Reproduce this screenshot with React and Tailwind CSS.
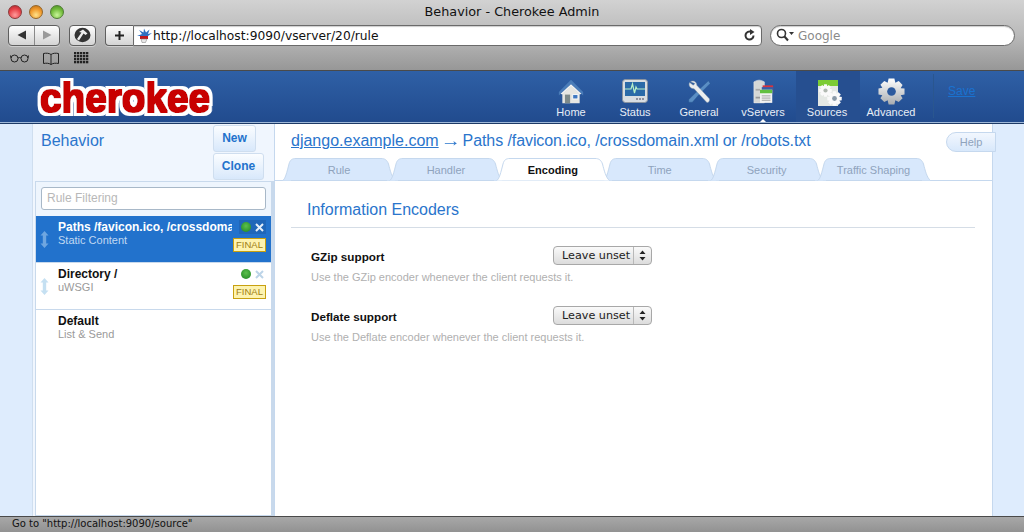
import React from "react";

const Lights = () => (
  <div className="flex gap-[7px] pl-[8px]">
    <span className="w-[14px] h-[14px] rounded-full border border-[#8a3a3a] bg-[radial-gradient(circle_at_50%_75%,#ff9c9c,#e8444a_55%,#a8242a)]" />
    <span className="w-[14px] h-[14px] rounded-full border border-[#93662a] bg-[radial-gradient(circle_at_50%_75%,#ffe28a,#f09a2c_55%,#b86a14)]" />
    <span className="w-[14px] h-[14px] rounded-full border border-[#4f7d35] bg-[radial-gradient(circle_at_50%_75%,#c8f59a,#74bd3d_55%,#4a8a22)]" />
  </div>
);

const btn = "bg-gradient-to-b from-[#fdfdfd] to-[#d4d4d4] border border-[#5f5f5f] shadow-[0_1px_0_rgba(255,255,255,0.4)]";

const Chrome = () => (
  <div className="h-[71px] shrink-0 border-b border-[#4a4a4a] bg-gradient-to-b from-[#d2d2d2] via-[#bababa] to-[#979797] font-['DejaVu_Sans',sans-serif] relative">
    <div className="h-[24px] flex items-center relative">
      <Lights />
      <span className="absolute inset-x-0 top-[3px] text-center text-[12.8px] leading-[18px] text-[#111]">Behavior - Cherokee Admin</span>
    </div>
    <div className="h-[22px] flex items-center pl-[8px]">
      <div className={`w-[52px] h-[21px] rounded-[4px] flex ${btn}`}>
        <div className="w-[26px] flex items-center justify-center border-r border-[#8a8a8a]">
          <svg width="10" height="10" viewBox="0 0 10 10"><path d="M0.5 5L9 0.5V9.5Z" fill="#333" /></svg>
        </div>
        <div className="flex-1 flex items-center justify-center">
          <svg width="10" height="10" viewBox="0 0 10 10"><path d="M9.5 5L1 0.5V9.5Z" fill="#9a9a9a" /></svg>
        </div>
      </div>
      <div className={`ml-[9px] w-[27px] h-[21px] rounded-[4px] flex items-center justify-center ${btn}`}>
        <svg width="19" height="16" viewBox="0 0 19 16">
          <ellipse cx="9.5" cy="8" rx="8" ry="7.2" fill="#333" />
          <path d="M6 5L10 2.5L14.5 6.5L12.5 8L10.5 6.5L6 13.5L4 12L8.5 5.5Z" fill="#eee" />
        </svg>
      </div>
      <div className={`ml-[9px] w-[28px] h-[21px] rounded-l-[4px] flex items-center justify-center border-r-0 ${btn}`}>
        <svg width="11" height="11" viewBox="0 0 11 11"><path d="M5.5 1V10M1 5.5H10" stroke="#222" strokeWidth="2" /></svg>
      </div>
      <div className="w-[629px] h-[21px] bg-white border border-[#6a6a6a] rounded-r-[4px] flex items-center pl-[2px] pr-[5px] shadow-[inset_0_1px_1px_rgba(0,0,0,0.2)]">
        <svg width="17" height="15" viewBox="0 0 17 15" className="shrink-0">
          <path d="M1 8L6 6L3 2L7.5 4.5L8 0.5L10 4.5L13.5 1.5L12 6L16 5L12 8Z" fill="#2f6fc0" />
          <rect x="4" y="8" width="8" height="3" fill="#c0181c" />
          <path d="M5 11H11L9.5 14.5H6Z" fill="#e8e8e8" stroke="#777" strokeWidth="0.5" />
        </svg>
        <span className="pt-[1px] text-[12.25px] leading-[18px] text-[#111] flex-1">http://localhost:9090/vserver/20/rule</span>
        <svg width="13" height="13" viewBox="0 0 13 13"><path d="M10.5 6.5A4 4 0 1 1 8.2 2.9" fill="none" stroke="#333" strokeWidth="2" /><path d="M7 0L11.5 3L7 6Z" fill="#333" /></svg>
      </div>
      <div className="ml-[8px] w-[245px] h-[21px] bg-white border border-[#6a6a6a] rounded-full flex items-center pl-[5px] shadow-[inset_0_1px_1px_rgba(0,0,0,0.2)]">
        <svg width="18" height="14" viewBox="0 0 18 14">
          <circle cx="5.5" cy="5.5" r="4" fill="none" stroke="#333" strokeWidth="1.6" />
          <path d="M8.5 8.5L12 12.5" stroke="#333" strokeWidth="2" />
          <path d="M13 4H18L15.5 7Z" fill="#333" />
        </svg>
        <span className="ml-[4px] pt-[1px] text-[12px] text-[#8a8a8a] leading-[16px]">Google</span>
      </div>
    </div>
    <div className="h-[24px] flex items-center pl-[10px] gap-[12px]">
      <svg width="19" height="10" viewBox="0 0 19 10" fill="none" stroke="#222" strokeWidth="1">
        <circle cx="4.5" cy="5.5" r="3.5" /><circle cx="14.5" cy="5.5" r="3.5" /><path d="M8 5Q9.5 4 11 5M1 5L0.5 2.5M18 5L18.5 2.5" />
      </svg>
      <svg width="18" height="13" viewBox="0 0 18 13" fill="none" stroke="#222" strokeWidth="1" className="ml-[1px]">
        <path d="M9 2.5C7 1 4 1 1.5 1.5V11.5C4 11 7 11 9 12.5C11 11 14 11 16.5 11.5V1.5C14 1 11 1 9 2.5ZM9 2.5V12.5" />
      </svg>
      <svg width="16" height="12" viewBox="0 0 16 12" className="ml-[2px]" fill="#222">
        {[0, 3, 6, 9].map((y) => [0, 3, 6, 9, 12].map((x) => <rect key={`${x}-${y}`} x={x} y={y} width="2.3" height="2.3" />))}
      </svg>
    </div>
  </div>
);

const Logo = () => (
  <svg width="190" height="48" viewBox="0 0 190 48" className="block">
    <defs>
      <filter id="lg" x="-10%" y="-20%" width="120%" height="140%">
        <feMorphology in="SourceAlpha" operator="dilate" radius="1.3" result="fat" />
        <feGaussianBlur in="fat" stdDeviation="0.5" result="soft" />
        <feFlood floodColor="#c80000" />
        <feComposite in2="soft" operator="in" result="red" />
        <feMorphology in="SourceAlpha" operator="dilate" radius="3.7" result="out" />
        <feGaussianBlur in="out" stdDeviation="0.6" result="outs" />
        <feFlood floodColor="#ffffff" />
        <feComposite in2="outs" operator="in" result="white" />
        <feMerge><feMergeNode in="white" /><feMergeNode in="red" /></feMerge>
      </filter>
    </defs>
    <text x="11" y="38" filter="url(#lg)" fontFamily="'Liberation Sans', sans-serif" fontWeight="700" fontSize="41" textLength="170" lengthAdjust="spacingAndGlyphs">cherokee</text>
  </svg>
);

const IconHome = () => (
  <svg width="26" height="26" viewBox="0 0 30 30" className="mt-[1px]">
    <path d="M1 15L15 1L29 15V19L15 6L1 19Z" fill="#4a7cb8" />
    <path d="M3 17L15 6L27 17L25 18L15 9L5 18Z" fill="#f4f4f4" />
    <path d="M5 17L15 8L25 17V28H5Z" fill="#e6e6e2" />
    <rect x="8" y="18" width="6" height="10" fill="#7d8a8a" />
    <rect x="17" y="18" width="6" height="5" fill="#3f78c0" stroke="#fff" />
  </svg>
);
const IconStatus = () => (
  <svg width="26" height="24" viewBox="0 0 26 24" className="mt-[1px]">
    <rect x="0.5" y="0.5" width="25" height="23" rx="3" fill="#d8dde2" stroke="#8a94a0" />
    <rect x="3" y="3" width="20" height="14" fill="#2a6aa8" />
    <path d="M3 10H9L10.5 5L12.5 14L14 8L15 10H23" fill="none" stroke="#b8f0c8" strokeWidth="1.2" />
    <circle cx="15" cy="20" r="1" fill="#778" /><circle cx="18" cy="20" r="1" fill="#778" /><circle cx="21" cy="20" r="1" fill="#778" />
  </svg>
);
const IconGeneral = () => (
  <svg width="25" height="25" viewBox="0 0 26 28" className="mt-[1px]">
    <path d="M23 2L25 5L12 18L5 26L1 26L1 23L9 15Z" fill="#5a8ec4" stroke="#2c5a90" strokeWidth="0.5" />
    <path d="M3 3C6 1 10 3 10 7L24 22C25 24 23 27 21 26L7 11C3 11 0 7 2 4L6 7L8 5Z" fill="#eceeee" stroke="#8a9aa8" strokeWidth="0.5" />
  </svg>
);
const IconVServers = () => (
  <svg width="21" height="25" viewBox="0 0 24 28" className="mt-[1px]">
    <path d="M1 3Q7 -1 13 3V27H1Z" fill="#d6d8d6" stroke="#eee" strokeWidth="0.6" />
    <rect x="3" y="11" width="5" height="2" fill="#aaa" /><rect x="3" y="20" width="5" height="2" fill="#999" />
    <rect x="11" y="7" width="12" height="9" fill="#d8343c" />
    <rect x="10" y="9" width="13" height="9" fill="#3a5ea8" />
    <rect x="8" y="12" width="14" height="15" fill="#f2f2f2" />
    <rect x="8" y="12" width="14" height="4" fill="#62c040" />
    <path d="M10 19H20M10 21.5H20M10 24H20" stroke="#999" />
  </svg>
);
const Gear = ({ s = 28, c = "#e8e8e8", hole = "#2c5a9e", cls = "" }) => (
  <svg width={s} height={s} viewBox="0 0 28 28" className={cls}>
    <g fill={c}>
      {[0, 45, 90, 135].map((a) => (
        <rect key={a} x="10.5" y="0.5" width="7" height="27" rx="1" transform={`rotate(${a} 14 14)`} />
      ))}
      <circle cx="14" cy="14" r="10" />
    </g>
    <circle cx="14" cy="14" r="4.5" fill={hole} />
  </svg>
);
const IconAdvanced = () => (
  <svg width="27" height="27" viewBox="0 0 28 28">
    <defs>
      <linearGradient id="gg" x1="0" y1="0" x2="0" y2="1">
        <stop offset="0" stopColor="#ffffff" />
        <stop offset="1" stopColor="#a8acb0" />
      </linearGradient>
    </defs>
    <path fill="url(#gg)" d="M11 0.5H17L18 5L21.5 3.2L25.5 7.2L23.5 10.5L27.5 11V17L23.5 18L25.5 21L21.5 25L18 23L17 27.5H11L10 23L6.5 25L2.5 21L4.5 18L0.5 17V11L4.5 10L2.5 7L6.5 3L10 5Z" />
    <circle cx="14" cy="14" r="4.5" fill="#2c5a9e" />
  </svg>
);
const IconSources = () => (
  <div className="relative w-[24px] h-[28px] mt-[2px]">
    <div className="absolute left-[3px] top-0 w-[20px] h-[26px] bg-[#e4e8e4]">
      <div className="h-[6px] bg-[#7ccc34]" />
    </div>
    <Gear s={13} c="#fafafa" hole="#b0b8b0" cls="absolute left-[4px] top-[4px]" />
    <Gear s={15} c="#fafafa" hole="#8a9aa8" cls="absolute left-[12px] top-[11px]" />
  </div>
);

const navs = [
  ["Home", <IconHome key="h" />],
  ["Status", <IconStatus key="s" />],
  ["General", <IconGeneral key="g" />],
  ["vServers", <IconVServers key="v" />],
  ["Sources", <IconSources key="so" />],
  ["Advanced", <IconAdvanced key="a" />],
];

const Header = () => (
  <div className="h-[52px] shrink-0 flex bg-gradient-to-b from-[#2f60a6] to-[#214b8e] border-b border-[#9fb8d8] font-['Liberation_Sans',sans-serif] relative">
    <div className="w-[540px] pl-[29px] pt-[3px] shrink-0"><Logo /></div>
    {navs.map(([label, icon]) => (
      <div key={label} className={`w-[64px] h-[51px] pr-[2px] flex flex-col items-center relative ${label === "Sources" ? "bg-[#264f90]" : ""}`}>
        <div className="h-[34px] pt-[7px] flex items-start justify-center">{icon}</div>
        <span className="text-[11px] leading-[13px] text-[#e8eef6] mt-[1px]">{label}</span>
        {label === "vServers" && <span className="absolute bottom-0 left-[28px] border-x-[3px] border-x-transparent border-b-[3px] border-b-white" />}
      </div>
    ))}
    <div className="ml-[9px] w-px h-[44px] mt-[3px] bg-[#2a568f]" />
    <a className="ml-[14px] mt-[13px] text-[12px] leading-[14px] underline text-[#1a72d0]">Save</a>
  </div>
);

const Rule = ({ title, sub, active, final, dim, last }) => (
  <div className={`h-[47px] shrink-0 relative flex ${last ? "" : "border-b border-[#c8d9ec]"} ${active ? "bg-[#2272cc]" : "bg-white"}`}>
    <div className="w-[22px] shrink-0 flex justify-center pr-[6px] pt-[15px]">
      {final && (
        <svg width="9" height="17" viewBox="0 0 9 17">
          <path d="M4.5 0L8.5 4.5H6.2V12.5H8.5L4.5 17L0.5 12.5H2.8V4.5H0.5Z" fill={active ? "#6fa6e0" : "#c5e0f2"} />
        </svg>
      )}
    </div>
    <div className="flex-1 min-w-0 pt-[4px] overflow-hidden">
      <div className={`text-[12px] leading-[14px] font-bold whitespace-nowrap overflow-hidden w-[174px] ${active ? "text-white" : "text-[#111]"}`}>{title}</div>
      <div className={`text-[11px] leading-[13px] ${active ? "text-[#c0d8f2]" : "text-[#9a9a9a]"}`}>{sub}</div>
    </div>
    {final && (
      <div className="absolute right-[5px] top-[4px] flex flex-col items-end">
        <div className={`h-[14px] flex items-center gap-[4px] pl-[2px] pr-[2px] ${active ? "bg-[#1f66b8]" : ""}`}>
          <span className="w-[10px] h-[10px] rounded-full bg-[radial-gradient(circle_at_50%_40%,#5cc04c,#1c8420)]" />
          <svg width="9" height="9" viewBox="0 0 9 9"><path d="M1 1L8 8M8 1L1 8" stroke={dim ? "#bcd4e8" : "#e4eef8"} strokeWidth="2" /></svg>
        </div>
        <div className="mt-[4px] w-[33px] h-[14px] bg-[#fdf3b0] border border-[#c8a010] text-[9.5px] leading-[12px] text-center text-[#a08010]">FINAL</div>
      </div>
    )}
  </div>
);

const Sidebar = () => (
  <div className="w-[242px] shrink-0 border-l border-[#cfdeef] bg-[#f0f6fe] flex flex-col relative">
    <div className="h-[57px] shrink-0 flex pl-[8px]">
      <div className="w-[172px] text-[16px] leading-[18px] pt-[8px] text-[#2a75cc]">Behavior</div>
      <div className="flex flex-col items-start gap-[1px] pt-[1px]">
        {[["New", "w-[43px]"], ["Clone", "w-[51px]"]].map(([t, w]) => (
          <div key={t} className={`${w} h-[27px] rounded-[3px] border border-[#cfdeef] bg-gradient-to-b from-[#fbfdff] to-[#d8e8fb] text-center text-[12px] leading-[25px] font-bold text-[#2272cc]`}>{t}</div>
        ))}
      </div>
    </div>
    <div className="flex-1 ml-[2px] border border-[#c8d9ec] border-r-[3px] flex flex-col bg-white min-h-0">
      <div className="h-[34px] shrink-0 bg-[#eef5fd] pl-[5px] pr-[5px] pt-[5px]">
        <div className="h-[23px] bg-white border border-[#a8b8c8] rounded-[3px] pl-[5px] text-[12px] leading-[21px] text-[#b8b8b8]">Rule Filtering</div>
      </div>
      <Rule title="Paths /favicon.ico, /crossdomain.xml or /robots.txt" sub="Static Content" active final />
      <Rule title="Directory /" sub="uWSGI" final dim />
      <Rule title="Default" sub="List & Send" last />
    </div>
  </div>
);

const tabs = ["Rule", "Handler", "Encoding", "Time", "Security", "Traffic Shaping"];

const Tab = ({ label }) => {
  const on = label === "Encoding";
  return (
    <div className={`relative w-[114px] h-[23px] -mr-[7.1px] shrink-0 flex items-center justify-center pt-[2px] text-[11px] ${on ? "z-10 font-bold text-[#111]" : "text-[#8fa3bc]"}`}>
      <svg width="114" height="23" viewBox="0 0 114 23" className="absolute inset-0">
        <path d="M0.5 22.5C3 22 5 14 7 6C8 2 10 0.5 14 0.5H99C103 0.5 105 2 106.5 6C108 12 110 20 113.5 22.5" fill={on ? "#ffffff" : "#d8e8fc"} stroke="#c5d8ee" />
        {!on && <path d="M9 22.5H105" stroke="#c5d8ee" fill="none" />}
      </svg>
      <span className="relative">{label}</span>
    </div>
  );
};

const Select = () => (
  <div className="w-[99px] h-[19px] rounded-[4px] border border-[#a8a8a8] bg-gradient-to-b from-[#fafafa] to-[#dcdcdc] flex font-['DejaVu_Sans',sans-serif] text-[11.2px] leading-[17px] text-[#222]">
    <span className="flex-1 pl-[8px] whitespace-nowrap">Leave unset</span>
    <span className="w-[18px] border-l border-[#b8b8b8] flex items-center justify-center">
      <svg width="7" height="11" viewBox="0 0 7 11"><path d="M3.5 0.5L6.5 4H0.5ZM3.5 10.5L6.5 7H0.5Z" fill="#222" /></svg>
    </span>
  </div>
);

const Field = ({ label, help }) => (
  <div className="h-[60px] pl-[36px] relative">
    <div className="flex items-start">
      <div className="w-[242px] text-[11.7px] leading-[14px] font-bold text-[#111] pt-[4px]">{label}</div>
      <Select />
    </div>
    <div className="text-[11px] leading-[13px] text-[#b0b0b0] mt-[6px]">{help}</div>
  </div>
);

const Content = () => (
  <div className="flex-1 min-w-0 bg-white border-l border-[#c5d8ee] flex flex-col relative">
    <div className="h-[34px] shrink-0 pl-[16px] pt-[7px] text-[16px] leading-[20px] text-[#2a75cc] whitespace-nowrap">
      <a className="underline">django.example.com</a> <span className="inline-block scale-x-125">→</span> <span className="-ml-[1px] tracking-[-0.08px]">Paths /favicon.ico, /crossdomain.xml or /robots.txt</span>
    </div>
    <div className="h-[23px] shrink-0 flex pl-[7px] border-b border-[#c5d8ee]">
      {tabs.map((t) => <Tab key={t} label={t} />)}
    </div>
    <div className="pl-[16px] pr-[17px]">
      <div className="h-[47px] border-b border-[#d5dde6] pl-[16px] pt-[19px] text-[16px] leading-[20px] text-[#2a75cc]">Information Encoders</div>
    </div>
    <div className="pt-[18px]">
      <Field label="GZip support" help="Use the GZip encoder whenever the client requests it." />
      <Field label="Deflate support" help="Use the Deflate encoder whenever the client requests it." />
    </div>
    <div className="absolute right-[-4px] top-[8px] z-10 w-[50px] h-[20px] rounded-l-full border border-[#c5d8ee] bg-gradient-to-b from-[#f2f7fe] to-[#d8e8fb] text-center text-[11px] leading-[18px] text-[#8fa3bc]">Help</div>
  </div>
);

export default function App() {
  return (
    <div className="w-[1024px] h-[532px] overflow-hidden flex flex-col font-['Liberation_Sans',sans-serif]">
      <Chrome />
      <Header />
      <div className="h-px shrink-0 bg-[#1d3a66]" />
      <div className="flex-1 min-h-0 flex bg-[#deecfd]">
        <div className="w-[32px] shrink-0" />
        <Sidebar />
        <Content />
        <div className="w-[32px] shrink-0 border-l border-[#c5d8ee]" />
      </div>
      <div className="h-[16px] shrink-0 bg-gradient-to-b from-[#a8a8a8] to-[#929292] border-t border-[#4a4a4a] font-['DejaVu_Sans',sans-serif] text-[10px] leading-[14px] pl-[12px] text-[#111]">Go to "http://localhost:9090/source"</div>
    </div>
  );
}
